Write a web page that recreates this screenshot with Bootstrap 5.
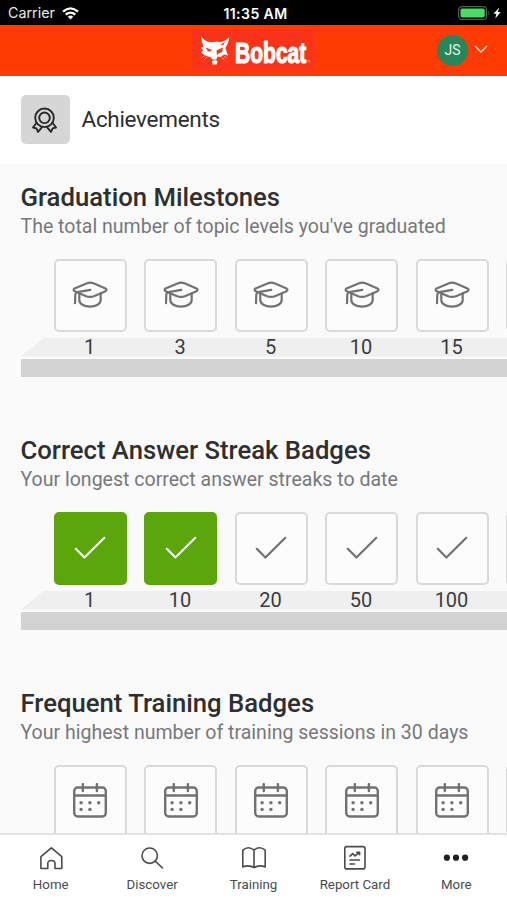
<!DOCTYPE html>
<html lang="en">
<head>
<meta charset="utf-8">
<meta name="viewport" content="width=device-width, initial-scale=1">
<title>Achievements</title>
<link href="https://cdn.jsdelivr.net/npm/bootstrap@5.3.0/dist/css/bootstrap.min.css" rel="stylesheet">
<style>
  body { font-family: Roboto, sans-serif; color: #2e2f30; background: #fafafa; }
  .screen { height: 900px; }
  .ios-bar { height: 25px; background: #000; color: #e8e8e8; font: 14px/26px Inter, sans-serif; padding: 0 4px 0 8px; }
  .ios-bar .carrier { font-size: 14.3px; }
  .ios-bar .clock { color: #fff; font-weight: 600; font-size: 14px; line-height: 28px; height: 25px; letter-spacing: .45px; }
  .brand-bar { height: 50.5px; background: #ff3a02; padding: 0 18px; }
  .logo-box { width: 123px; height: 41px; background: #f93419; }
  .avatar { width: 31px; height: 31px; background: #27875a; color: #e4f3ea; font-size: 14px; }
  .page-head { height: 88px; padding: 0 20.5px; gap: 12px; }
  .page-icon { width: 49px; height: 49px; background: #d6d6d6; border-radius: 5px; }
  .page-head h1 { font-size: 22.5px; line-height: 30px; letter-spacing: -.3px; padding-bottom: 2px; }
  .shelf-section { height: 253px; padding: 18.5px 0 0 20.5px; }
  .shelf-section h2 { font-size: 25.7px; line-height: 30px; padding-bottom: 2px; font-weight: 500; }
  .shelf-section p { font-size: 19.55px; line-height: 26px; color: #77787a; }
  .tiles { gap: 17.5px; padding: 18.5px 0 0 33px; }
  .tile { width: 73px; height: 73px; border: 2px solid #d9d9d9; border-radius: 5px; color: #717274; background: #fcfcfc; }
  .tile.earned { background: #5aa60b; border-color: #5aa60b; color: #fff; }
  .shelf-top { height: 19px; margin-top: 6px; padding-left: 32.5px; gap: 17.5px; background: #efefef; clip-path: polygon(24px 0, 100% 0, 100% 100%, 0 100%); font-size: 20px; line-height: 19px; color: #3b3c3d; }
  .shelf-top span { width: 73px; }
  .shelf-front { height: 18px; margin-top: 2px; background: #d3d3d3; }
  .tab-bar { height: 67px; border-top: 2px solid #e2e2e2; font-size: 13.3px; color: #4a4b4d; padding-top: 10px; }
  .tab-bar a { color: inherit; line-height: 18px; }
  .tab-bar svg { margin-bottom: 5px; }
</style>
<script src="https://cdn.jsdelivr.net/npm/bootstrap@5.3.0/dist/js/bootstrap.bundle.min.js"></script>
</head>
<body>
<svg width="0" height="0" class="position-absolute" aria-hidden="true">
  <symbol id="cap" viewBox="0 0 36 36">
    <g fill="none" stroke="currentColor" stroke-width="2.2" stroke-linecap="round" stroke-linejoin="round">
      <path d="M2.5 11.4 14.5 6.5Q18 5 21.5 6.300L33.5 11.5Q35.5 12.7 33.5 14.2L22.5 18.900Q18 20.8 13.500 18.900L2.700 14.300Q.7 12.800 2.500 11.400Z"/>
      <path d="M18.300 12.900 5.500 15.200Q3.400 15.700 3.300 17.500L3 26.200"/>
      <path d="M7.300 16.700V23C7.300 27 12 29.600 18 29.600S28.700 27 28.700 23V16.700"/>
    </g>
  </symbol>
  <symbol id="tick" viewBox="0 0 36 36">
    <path d="M3.800 18.800 12.400 27.500 32.300 7.800" fill="none" stroke="currentColor" stroke-width="2.200" stroke-linecap="round" stroke-linejoin="round"/>
  </symbol>
  <symbol id="cal" viewBox="0 0 36 36">
    <g fill="none" stroke="currentColor" stroke-width="2.400" stroke-linecap="round">
      <rect x="2.200" y="4.500" width="31.600" height="29" rx="3.500"/>
      <path d="M2.200 12.500H33.800M10.800 1.100V8M24.900 1.100V8"/>
    </g>
    <g fill="currentColor">
      <circle cx="9.100" cy="19.700" r="1.700"/><circle cx="17.900" cy="19.700" r="1.700"/><circle cx="26.700" cy="19.700" r="1.700"/>
      <circle cx="9.100" cy="26.400" r="1.700"/><circle cx="17.900" cy="26.400" r="1.700"/>
    </g>
  </symbol>
</svg>

<div class="screen d-flex flex-column overflow-hidden">
  <div class="ios-bar row g-0 flex-shrink-0">
    <div class="col d-flex align-items-center"><span class="carrier">Carrier</span>
      <svg style="margin-left:7px" width="17" height="13" viewBox="0 0 17 13" fill="none" stroke="#fff" stroke-width="2.200">
        <path d="M1 4.700Q8.500-1.900 16 4.700M3.700 7.700Q8.500 3.500 13.300 7.700"/><path d="M8.500 12.500 5.800 9.700Q8.500 7.500 11.200 9.700Z" fill="#fff" stroke="none"/>
      </svg>
    </div>
    <div class="col-auto clock">11:35 AM</div>
    <div class="col d-flex align-items-center justify-content-end">
      <svg width="46" height="16" viewBox="0 0 46 16">
        <rect x="1.600" y="1.600" width="28" height="12.800" rx="3.500" fill="none" stroke="#555a60" stroke-width="1.200"/>
        <rect x="3.500" y="3.400" width="24.200" height="9.200" rx="1.800" fill="#4cd964"/>
        <path d="M31.200 5.500Q33 8 31.200 10.500Z" fill="#555a60"/>
        <path d="M42.300 2.500 36.500 8.800H39.400L38.300 13.500 43.700 7.100H40.700Z" fill="#fff"/>
      </svg>
    </div>
  </div>

  <header class="brand-bar row g-0 align-items-center flex-shrink-0">
    <div class="col"></div>
    <div class="col-auto logo-box">
      <svg class="overflow-visible" width="123" height="41" viewBox="0 0 123 41">
        <path fill="#fff" d="M9.300 6C11 9.500 14.500 12 19 12.300 22 11.600 25 11.600 28 12.200 31.500 11.500 35 10 37.300 7.300 37 12 34.500 15.500 33.500 18L34.500 21.500 36 25.500 32 24.500 28.500 27 25.500 26.500 24.500 29.500 20.500 29.500 19 27.500 13.500 25.500 9 22.500 11 20.500 8.800 17.500 11.500 16.500Q9.300 12 9.300 6Z"/>
        <path fill="#f93419" d="M13.500 17.500 20 20Q19 22 16 21.300ZM24.500 20.500 31 17.500 30 22 26.500 23.500 25 25.500ZM28.500 14.500 33 12 31 15.500Z"/>
        <path fill="#fff" d="M19.800 31 22.500 30 25.500 31 24.700 34.500H20.700Z"/>
        <path fill="none" stroke="#ffd0c5" stroke-width=".6" d="M13 25.500 9.500 28M15.500 26.500 12 30M31.500 26 35 28M29.500 27.500 32.500 30"/>
        <text transform="translate(43 32.500) scale(.765 1.040)" font-family="'Liberation Sans', sans-serif" font-weight="700" font-size="27.500" fill="#fff" stroke="#fff" stroke-width="1.200">Bobcat</text>
        <circle cx="117" cy="31" r="1" fill="none" stroke="#ffb5a5" stroke-width=".6"/>
      </svg>
    </div>
    <div class="col d-flex align-items-center justify-content-end">
      <span class="avatar rounded-circle d-flex align-items-center justify-content-center">JS</span>
      <svg class="ms-1" width="17" height="10" viewBox="-1.500 0 17 10" fill="none" stroke="#ffe0d5" stroke-width="1.400"><path d="M1.500 1 7.500 7 13.500 1"/></svg>
    </div>
  </header>

  <div class="page-head bg-white d-flex align-items-center flex-shrink-0">
    <span class="page-icon d-flex align-items-center justify-content-center">
      <svg width="26" height="26" viewBox="0.500 0 26 26" fill="none" stroke="#27282a" stroke-width="1.900" stroke-linejoin="round">
        <circle cx="13" cy="10.800" r="9.300"/><circle cx="13" cy="10.800" r="5.300"/>
        <path d="M5 15.800 1.500 20.500 4.900 21.300 6.500 24.900 10.800 19.800M21 15.800 24.500 20.500 21.100 21.300 19.500 24.900 15.200 19.800"/>
      </svg>
    </span>
    <h1 class="mb-0 fw-normal">Achievements</h1>
  </div>

  <main class="flex-grow-1 overflow-hidden">
    <section class="shelf-section">
      <h2 class="m-0">Graduation Milestones</h2>
      <p class="m-0">The total number of topic levels you've graduated</p>
      <div class="tiles d-flex overflow-hidden">
        <div class="tile flex-shrink-0 d-flex align-items-center justify-content-center"><svg width="36" height="36"><use href="#cap"/></svg></div>
        <div class="tile flex-shrink-0 d-flex align-items-center justify-content-center"><svg width="36" height="36"><use href="#cap"/></svg></div>
        <div class="tile flex-shrink-0 d-flex align-items-center justify-content-center"><svg width="36" height="36"><use href="#cap"/></svg></div>
        <div class="tile flex-shrink-0 d-flex align-items-center justify-content-center"><svg width="36" height="36"><use href="#cap"/></svg></div>
        <div class="tile flex-shrink-0 d-flex align-items-center justify-content-center"><svg width="36" height="36"><use href="#cap"/></svg></div>
        <div class="tile flex-shrink-0"></div>
      </div>
      <div class="shelf-top d-flex text-center"><span>1</span><span>3</span><span>5</span><span>10</span><span>15</span></div>
      <div class="shelf-front"></div>
    </section>

    <section class="shelf-section">
      <h2 class="m-0">Correct Answer Streak Badges</h2>
      <p class="m-0">Your longest correct answer streaks to date</p>
      <div class="tiles d-flex overflow-hidden">
        <div class="tile earned flex-shrink-0 d-flex align-items-center justify-content-center"><svg width="36" height="36"><use href="#tick"/></svg></div>
        <div class="tile earned flex-shrink-0 d-flex align-items-center justify-content-center"><svg width="36" height="36"><use href="#tick"/></svg></div>
        <div class="tile flex-shrink-0 d-flex align-items-center justify-content-center"><svg width="36" height="36"><use href="#tick"/></svg></div>
        <div class="tile flex-shrink-0 d-flex align-items-center justify-content-center"><svg width="36" height="36"><use href="#tick"/></svg></div>
        <div class="tile flex-shrink-0 d-flex align-items-center justify-content-center"><svg width="36" height="36"><use href="#tick"/></svg></div>
        <div class="tile flex-shrink-0"></div>
      </div>
      <div class="shelf-top d-flex text-center"><span>1</span><span>10</span><span>20</span><span>50</span><span>100</span></div>
      <div class="shelf-front"></div>
    </section>

    <section class="shelf-section">
      <h2 class="m-0">Frequent Training Badges</h2>
      <p class="m-0">Your highest number of training sessions in 30 days</p>
      <div class="tiles d-flex overflow-hidden">
        <div class="tile flex-shrink-0 d-flex align-items-center justify-content-center"><svg width="36" height="36"><use href="#cal"/></svg></div>
        <div class="tile flex-shrink-0 d-flex align-items-center justify-content-center"><svg width="36" height="36"><use href="#cal"/></svg></div>
        <div class="tile flex-shrink-0 d-flex align-items-center justify-content-center"><svg width="36" height="36"><use href="#cal"/></svg></div>
        <div class="tile flex-shrink-0 d-flex align-items-center justify-content-center"><svg width="36" height="36"><use href="#cal"/></svg></div>
        <div class="tile flex-shrink-0 d-flex align-items-center justify-content-center"><svg width="36" height="36"><use href="#cal"/></svg></div>
        <div class="tile flex-shrink-0"></div>
      </div>
    </section>
  </main>

  <nav class="tab-bar bg-white row g-0 flex-shrink-0 text-center">
    <a class="col text-decoration-none d-flex flex-column align-items-center" href="#">
      <svg width="26" height="26" viewBox="0 0 26 26" fill="none" stroke="currentColor" stroke-width="1.600" stroke-linejoin="round"><path d="M2.900 23.500V11.600L13.400 2.800 23.800 11.600V23.500H17V18.500Q17 15.500 13.400 15.500T9.800 18.500V23.500Z"/></svg>
      <span>Home</span>
    </a>
    <a class="col text-decoration-none d-flex flex-column align-items-center" href="#">
      <svg width="26" height="26" viewBox="0 0 26 26" fill="none" stroke="currentColor" stroke-width="1.600" stroke-linecap="round"><circle cx="10.700" cy="10.700" r="7.700"/><path d="M16.200 16.200 23.500 23"/></svg>
      <span>Discover</span>
    </a>
    <a class="col text-decoration-none d-flex flex-column align-items-center" href="#">
      <svg width="26" height="26" viewBox="0 0 26 26" fill="none" stroke="currentColor" stroke-width="1.600" stroke-linejoin="round"><path d="M13 5.200Q7.500 .3 1.800 5.200V22Q7.500 19.500 13 22.500 18.500 19.500 24.200 22V5.200Q18.500 .3 13 5.200V22.500"/></svg>
      <span>Training</span>
    </a>
    <a class="col text-decoration-none d-flex flex-column align-items-center" href="#">
      <svg width="26" height="26" viewBox="0 0 26 26" fill="none" stroke="currentColor" stroke-width="1.600" stroke-linejoin="round" stroke-linecap="round"><rect x="2.800" y="1.600" width="20.200" height="22.300" rx="2"/><path d="M8 11.200 10.700 8.700 13 10.900 17.300 7.500M14.800 7.300H17.600V9.800M8 15H17.500M8 19H12.500"/></svg>
      <span>Report Card</span>
    </a>
    <a class="col text-decoration-none d-flex flex-column align-items-center" href="#">
      <svg width="26" height="26" viewBox="0 0 26 26" fill="#1f2022"><circle cx="3.900" cy="12.700" r="3.100"/><circle cx="13" cy="12.700" r="3.100"/><circle cx="22.100" cy="12.700" r="3.100"/></svg>
      <span>More</span>
    </a>
  </nav>
</div>
</body>
</html>
